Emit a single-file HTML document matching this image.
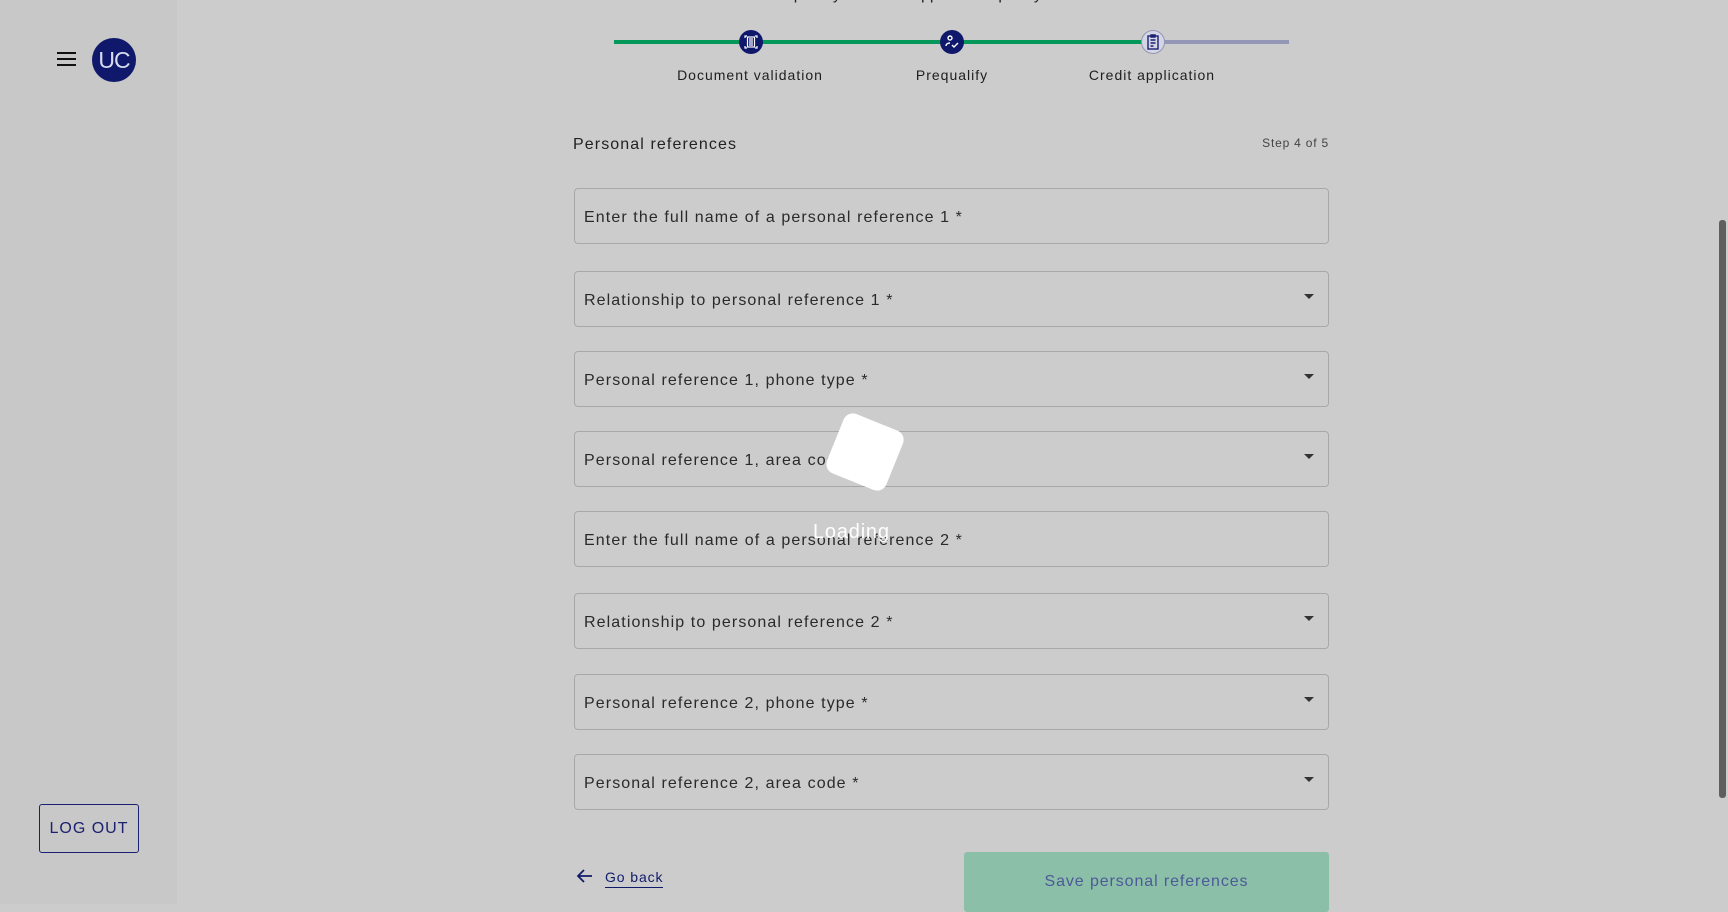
<!DOCTYPE html>
<html><head><meta charset="utf-8"><style>
*{box-sizing:border-box;margin:0;padding:0}
html,body{width:1728px;height:904px;overflow:hidden;background:#cccccc;font-family:"Liberation Sans",sans-serif}
.side{position:absolute;left:0;top:0;width:177px;height:904px;background:#c8c8c8}
.ham{position:absolute;left:57px;top:52px;width:19px}
.ham i{display:block;height:2px;background:#111;margin-bottom:4px}
.av{position:absolute;left:92px;top:38px;width:44px;height:44px;border-radius:50%;background:#0f186a;color:#d8dcef;font-size:23px;text-align:center;line-height:44px;letter-spacing:-1px}
.logout{position:absolute;left:39px;top:804px;width:100px;height:49px;border:1px solid #1b2070;border-radius:3px;color:#1b2070;font-size:16px;letter-spacing:1px;text-align:center;line-height:47px}
.line{position:absolute;top:40px;height:4px}
.circ{position:absolute;top:30px;width:24px;height:24px;border-radius:50%;background:#0f186a}
.lbl{position:absolute;top:67px;font-size:14px;color:#1e1e1e;letter-spacing:1px;transform:translateX(-50%);white-space:nowrap}
.title{position:absolute;left:573px;top:136px;font-size:16px;color:#222;letter-spacing:1.1px}
.step{position:absolute;right:399px;top:136px;font-size:12px;color:#444;letter-spacing:.8px}
.f{position:absolute;left:574px;width:755px;height:56px;border:1px solid #a8a8a8;border-radius:4px;font-size:16px;color:#2a2a2a;letter-spacing:1.1px;padding-left:9px;line-height:58px}
.f .ar{position:absolute;right:14px;top:22px;width:0;height:0;border-left:5px solid transparent;border-right:5px solid transparent;border-top:5px solid #333}
.back{position:absolute;left:575px;top:866px;color:#111a6a;font-size:14px}
.back span{position:absolute;left:30px;top:3px;border-bottom:1.5px solid #111a6a;padding-bottom:2px;letter-spacing:.9px;white-space:nowrap}
.save{position:absolute;left:964px;top:852px;width:365px;height:60px;background:#8bbfa8;border-radius:3px;color:#4c5a98;font-size:16px;letter-spacing:.9px;text-align:center;padding-top:21px}
.scroll{position:absolute;left:1719px;top:220px;width:7px;height:578px;background:#5e5e5e;border-radius:3px}
.load{position:absolute;left:833px;top:420px;width:64px;height:64px;background:#fff;border-radius:10px;transform:rotate(22deg)}
.ltxt{position:absolute;left:813px;top:521px;color:#fff;font-size:20px;letter-spacing:.8px}
</style></head><body>
<div class="side">
<div class="ham"><i></i><i></i><i></i></div>
<div class="av">UC</div>
<div class="logout">LOG OUT</div>
</div>
<div style="position:absolute;left:760px;top:-14px;font-size:16px;color:#222">Complete your credit application quickly</div>
<div class="line" style="left:614px;width:539px;background:#03985a"></div>
<div class="line" style="left:1153px;width:136px;background:#9396b4"></div>
<div class="circ" style="left:739px"><svg width="24" height="24" viewBox="0 0 24 24" fill="none" stroke="#fff" stroke-width="1.2"><path d="M6 8V6h2M16 6h2v2M18 16v2h-2M8 18H6v-2"/><rect x="8.5" y="7" width="7" height="10"/><path d="M10 9h4M10 11h4M10 13h4M10 15h4"/></svg></div>
<div class="circ" style="left:940px"><svg width="24" height="24" viewBox="0 0 24 24" fill="none" stroke="#fff" stroke-width="1.4"><circle cx="10" cy="8" r="2"/><path d="M6 16c0-2 2-3 4-3M12 15l2 2 4-4"/></svg></div>
<div class="circ" style="left:1141px;background:#d4d6e6;border:1px solid #9396b4"><svg width="22" height="22" viewBox="0 0 22 22" fill="none" stroke="#1b2070" stroke-width="1.4"><rect x="6" y="5" width="10" height="13"/><path d="M9 4h4v2H9zM8.5 9h5M8.5 12h5M8.5 15h3"/></svg></div>
<div class="lbl" style="left:750px">Document validation</div>
<div class="lbl" style="left:952px">Prequalify</div>
<div class="lbl" style="left:1152px">Credit application</div>
<div class="title">Personal references</div>
<div class="step">Step 4 of 5</div>
<div class="f" style="top:188px">Enter the full name of a personal reference 1 *</div>
<div class="f" style="top:271px">Relationship to personal reference 1 *<i class="ar"></i></div>
<div class="f" style="top:351px">Personal reference 1, phone type *<i class="ar"></i></div>
<div class="f" style="top:431px">Personal reference 1, area code *<i class="ar"></i></div>
<div class="f" style="top:511px">Enter the full name of a personal reference 2 *</div>
<div class="f" style="top:593px">Relationship to personal reference 2 *<i class="ar"></i></div>
<div class="f" style="top:674px">Personal reference 2, phone type *<i class="ar"></i></div>
<div class="f" style="top:754px">Personal reference 2, area code *<i class="ar"></i></div>
<div class="back"><svg width="20" height="20" viewBox="0 0 20 20" fill="none" stroke="#111a6a" stroke-width="1.8"><path d="M17 10H3M9 4l-6 6 6 6"/></svg><span>Go back</span></div>
<div class="save">Save personal references</div>
<div class="load"></div>
<div class="ltxt">Loading</div>
<div class="scroll"></div>
</body></html>
